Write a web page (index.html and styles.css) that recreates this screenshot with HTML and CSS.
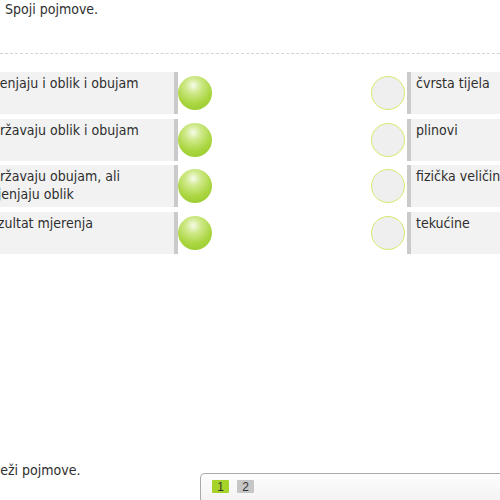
FILE: index.html
```html
<!DOCTYPE html>
<html>
<head>
<meta charset="utf-8">
<link rel="stylesheet" href="styles.css">
</head>
<body>
<div class="title">Spoji pojmove.</div>
<div class="divider"></div>
<div class="matcher">
  <div class="col left">
    <div class="item"><div class="text">Mijenjaju i oblik i obujam</div><div class="bar"></div><div class="ball"></div></div>
    <div class="item"><div class="text">Održavaju oblik i obujam</div><div class="bar"></div><div class="ball"></div></div>
    <div class="item"><div class="text">Održavaju obujam, ali mijenjaju oblik</div><div class="bar"></div><div class="ball"></div></div>
    <div class="item"><div class="text">Rezultat mjerenja</div><div class="bar"></div><div class="ball"></div></div>
  </div>
  <div class="col right">
    <div class="item"><div class="ring"></div><div class="bar"></div><div class="text">čvrsta tijela</div></div>
    <div class="item"><div class="ring"></div><div class="bar"></div><div class="text">plinovi</div></div>
    <div class="item"><div class="ring"></div><div class="bar"></div><div class="text">fizička veličina</div></div>
    <div class="item"><div class="ring"></div><div class="bar"></div><div class="text">tekućine</div></div>
  </div>
</div>
<div class="footer">
  <div class="ftext">Poveži pojmove.</div>
  <div class="pager"><span class="pg active">1</span><span class="pg">2</span></div>
</div>
</body>
</html>
```
FILE: styles.css
```css
html, body {
  margin: 0;
  padding: 0;
  background: #fff;
  overflow: hidden;
  width: 500px;
  height: 500px;
}
body {
  font-family: "DejaVu Sans Condensed", "DejaVu Sans", sans-serif;
  font-stretch: condensed;
  font-size: 14px;
  color: #2e2e2e;
}
.title {
  padding: 1px 0 0 5px;
  height: 16px;
  line-height: 16px;
}
.divider {
  margin-top: 36px;
  border-top: 1px dashed #d3d3d3;
}
.matcher {
  display: flex;
  margin-top: 18px;
  margin-left: -60px;
  width: 620px;
}
.col {
  display: flex;
  flex-direction: column;
  gap: 4.67px;
}
.item {
  display: flex;
  height: 42px;
}
.left .text {
  width: 192px;
  padding-left: 42px;
  background: #f2f2f2;
  line-height: 18px;
  padding-top: 2px;
  box-sizing: content-box;
}
.bar {
  width: 4px;
  background: #cacaca;
  flex: none;
}
.ball {
  width: 34px;
  height: 34px;
  margin-top: 4px;
  border-radius: 50%;
  background: radial-gradient(circle at 45% 28%, #f6fbea 0%, #cfe98a 25%, #aad640 60%, #92c426 100%);
  flex: none;
}
.right {
  margin-left: 159px;
}
.ring {
  width: 32px;
  height: 32px;
  margin-top: 4px;
  margin-right: 2px;
  border-radius: 50%;
  border: 1px solid #d2ec6c;
  background: #efefef;
  flex: none;
}
.right .text {
  width: 200px;
  background: #f2f2f2;
  padding-left: 5px;
  padding-top: 2px;
  line-height: 18px;
  white-space: nowrap;
}
.footer {
  margin-top: 207px;
  display: flex;
  align-items: flex-start;
  margin-left: -22px;
}
.ftext {
  line-height: 18px;
  width: 222px;
}
.pager {
  margin-top: 12px;
  flex: 1;
  height: 40px;
  border: 1px solid #aaa;
  border-right: none;
  border-bottom: none;
  border-top-left-radius: 5px;
  background: linear-gradient(#fdfdfd, #ececec);
  padding: 6px 0 0 11px;
  display: flex;
  gap: 8px;
  align-items: flex-start;
}
.pg {
  width: 17px;
  height: 13px;
  line-height: 14px;
  text-align: center;
  font-family: "Liberation Sans", Arial, sans-serif;
  font-size: 12px;
  font-stretch: normal;
  background: #c6c6c6;
  color: #333;
  border-radius: 1px;
}
.pg.active {
  background: #a5d32a;
}
```
